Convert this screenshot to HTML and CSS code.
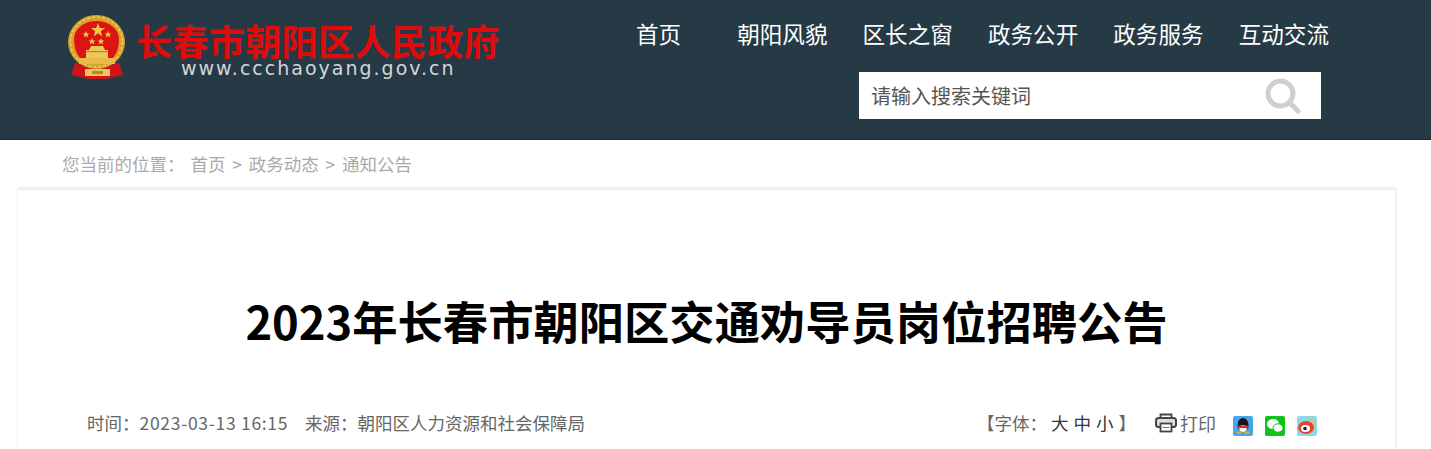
FILE: index.html
```html
<!DOCTYPE html>
<html>
<head>
  <meta charset="utf-8">
  <title>2023年长春市朝阳区交通劝导员岗位招聘公告</title>
  <link rel="stylesheet" href="styles.css">
</head>
<body>
  <div class="header">
    <div class="logo">
      <svg class="emblem" width="59" height="64" viewBox="0 0 59 64">
        <path d="M7 48 L3 60 L16 63 L42 63 L55 60 L51 48 Z" fill="#c8141c"/>
        <ellipse cx="28.500" cy="27" rx="28.500" ry="27" fill="#d9a02c"/>
        <ellipse cx="28.500" cy="27" rx="26" ry="25" fill="none" stroke="#f0cb5e" stroke-width="1.500" stroke-dasharray="3 2"/>
        <path d="M6 24 A22.500 18 0 0 1 51 24 Q51 36 45 43 L12 43 Q6 36 6 24 Z" fill="#dc1414"/>
        <polygon points="30,8 31.800,13 37,13 32.800,16.200 34.300,21.500 30,18.300 25.700,21.500 27.200,16.200 23,13 28.200,13" fill="#f5c840"/>
        <polygon points="18,16 19,18.500 21.500,18.500 19.500,20 20.200,22.500 18,21 15.800,22.500 16.500,20 14.500,18.500 17,18.500" fill="#f5c840"/>
        <polygon points="40,16 41,18.500 43.500,18.500 41.500,20 42.200,22.500 40,21 37.800,22.500 38.500,20 36.500,18.500 39,18.500" fill="#f5c840"/>
        <polygon points="24,23 25,25.500 27.500,25.500 25.500,27 26.200,29.500 24,28 21.800,29.500 22.500,27 20.500,25.500 23,25.500" fill="#f5c840"/>
        <polygon points="33,23 34,25.500 36.500,25.500 34.500,27 35.200,29.500 33,28 30.800,29.500 31.500,27 29.500,25.500 32,25.500" fill="#f5c840"/>
        <path d="M23 31 L35 31 L37 35 L40 35 L40 43 L18 43 L18 35 L21 35 Z" fill="#eec75a"/>
        <rect x="18" y="36" width="22" height="1.200" fill="#b8861e"/>
        <rect x="11" y="43" width="36" height="6" fill="#e9bc4a"/>
        <path d="M7 51 L17 54 L17 61 L5 60 Z M51 51 L42 54 L42 61 L53 60 Z" fill="#cf1519"/>
        <path d="M17 54 L42 54 L42 61 L17 61 Z" fill="#eec75a"/>
        <rect x="24" y="56" width="11" height="3" fill="#b8861e"/>
        <path d="M17 61 L42 61 L40 64 L19 64 Z" fill="#cf1519"/>
      </svg>
      <div class="logo-text">
        <div class="site-name">长春市朝阳区人民政府</div>
        <div class="site-url">www.ccchaoyang.gov.cn</div>
      </div>
    </div>
    <div class="head-right">
      <ul class="nav">
        <li class="first"><a href="#">首页</a></li>
        <li><a href="#">朝阳风貌</a></li>
        <li><a href="#">区长之窗</a></li>
        <li><a href="#">政务公开</a></li>
        <li><a href="#">政务服务</a></li>
        <li><a href="#">互动交流</a></li>
      </ul>
      <div class="search">
        <span class="search-text">请输入搜索关键词</span>
        <svg width="36" height="36" viewBox="0 0 36 36">
          <circle cx="15.500" cy="15.500" r="12.500" fill="none" stroke="#cfcfcf" stroke-width="5"/>
          <line x1="24.500" y1="24.500" x2="33" y2="33" stroke="#cfcfcf" stroke-width="5" stroke-linecap="round"/>
        </svg>
      </div>
    </div>
  </div>

  <div class="crumb">
    <span class="crumb-label">您当前的位置：</span>
    <a href="#">首页</a><span class="sep">&gt;</span><a href="#">政务动态</a><span class="sep">&gt;</span><a href="#">通知公告</a>
  </div>

  <div class="card">
    <h1 class="title">2023年长春市朝阳区交通劝导员岗位招聘公告</h1>
    <div class="meta">
      <div class="meta-left">
        <span>时间：<span class="time">2023-03-13 16:15</span></span>
        <span class="source">来源：朝阳区人力资源和社会保障局</span>
      </div>
      <div class="meta-right">
        <div class="font-size">【字体：<span class="sizes"><a href="#">大</a><a href="#">中</a><a href="#">小</a></span>】</div>
        <div class="print">
          <svg width="22" height="20" viewBox="0 0 22 20">
            <path d="M5.500 5 V1.500 H16.500 V5" fill="none" stroke="#444" stroke-width="1.800"/>
            <rect x="1" y="5" width="20" height="9" rx="2.500" fill="#ddd" stroke="#444" stroke-width="2"/>
            <rect x="5.500" y="10.500" width="11" height="8" fill="#fff" stroke="#444" stroke-width="1.800"/>
            <line x1="7.500" y1="14.500" x2="14.500" y2="14.500" stroke="#777"/>
          </svg>
          <span class="print-text">打印</span>
        </div>
        <div class="share">
          <svg width="20" height="20" viewBox="0 0 20 20">
            <rect width="20" height="20" rx="2" fill="#45a6ea"/>
            <ellipse cx="10" cy="9" rx="5.500" ry="7" fill="#15171c"/>
            <ellipse cx="10" cy="12.500" rx="3.800" ry="3.500" fill="#f4f1e8"/>
            <rect x="4.500" y="9.500" width="11" height="2.500" rx="1" fill="#d8282a"/>
            <ellipse cx="6" cy="16.800" rx="2.800" ry="1.300" fill="#eda526"/>
            <ellipse cx="14" cy="16.800" rx="2.800" ry="1.300" fill="#eda526"/>
          </svg>
          <svg width="20" height="20" viewBox="0 0 20 20">
            <rect width="20" height="20" rx="2" fill="#12c21c"/>
            <ellipse cx="8" cy="8" rx="6" ry="5" fill="#fff"/>
            <ellipse cx="13" cy="12" rx="5" ry="4.200" fill="#fff" stroke="#12c21c"/>
          </svg>
          <svg width="20" height="20" viewBox="0 0 20 20">
            <rect width="20" height="20" rx="2" fill="#8fd8ea"/>
            <ellipse cx="9" cy="11.500" rx="8" ry="6.500" fill="#e8432c"/>
            <ellipse cx="8.500" cy="12.500" rx="4.500" ry="3.500" fill="#fff"/>
            <circle cx="8" cy="12.500" r="1.800" fill="#222"/>
            <path d="M12 3 Q18 3 17.500 9" fill="none" stroke="#e8c24a" stroke-width="1.800"/>
          </svg>
        </div>
      </div>
    </div>
  </div>
</body>
</html>
```

FILE: styles.css
```css
* {
  box-sizing: border-box;
}

html, body {
  height: 449px;
  overflow: hidden;
}

body {
  margin: 0;
  background-color: #fff;
  font-family: "Noto Sans CJK SC", "Liberation Sans", sans-serif;
}

a {
  color: inherit;
  text-decoration: none;
}

.header {
  display: flex;
  height: 140px;
  padding-left: 68px;
  background-color: #263a46;
  border-bottom: 1px solid #1b2b35;
}

.logo {
  display: flex;
  width: 568px;
  padding-top: 15px;
}

.emblem {
  flex: none;
}

.logo-text {
  margin-left: 9px;
  padding-top: 7px;
}

.site-name {
  height: 36px;
  color: #e00b0b;
  font-size: 36px;
  font-weight: 700;
  letter-spacing: 0.400px;
  line-height: 36px;
  white-space: nowrap;
}

.site-url {
  margin-left: 45px;
  color: #d4d6d8;
  font-family: "DejaVu Sans", sans-serif;
  font-size: 19px;
  letter-spacing: 2px;
  line-height: 20px;
  white-space: nowrap;
}

.head-right {
  width: 693px;
}

.nav {
  display: flex;
  gap: 35px;
  margin: 0;
  padding: 14px 0 0;
  list-style: none;
  color: #fff;
  font-size: 22.600px;
  line-height: 40px;
}

.nav li {
  white-space: nowrap;
}

.nav .first {
  width: 68.500px;
}

.search {
  display: flex;
  align-items: center;
  justify-content: space-between;
  width: 462px;
  height: 47px;
  margin: 18px 0 0 223px;
  padding: 0 20px 0 12px;
  background-color: #fff;
}

.search-text {
  color: #555;
  font-size: 20px;
}

.crumb {
  height: 48px;
  padding: 11px 0 0 62px;
  color: #aaa;
  font-size: 17.500px;
  line-height: 26px;
}

.crumb-label {
  margin-right: 2px;
}

.sep {
  margin: 0 6.800px;
}

.card {
  height: 261px;
  margin: 0 36px 0 18px;
  padding: 95px 70px 0;
  border-top: 2px solid #eceff1;
  box-shadow: 1px 0 3px #dbe8f0, -1px 0 2px #f4f8fa;
}

.title {
  margin: 0;
  color: #000;
  font-size: 45.300px;
  font-weight: 700;
  line-height: 70px;
  text-align: center;
  white-space: nowrap;
}

.meta {
  display: flex;
  justify-content: space-between;
  margin-top: 55px;
  margin-left: -1px;
  color: #666;
  font-size: 17.500px;
  line-height: 26px;
}

.time {
  letter-spacing: 0.700px;
}

.source {
  margin-left: 13px;
}

.meta-right {
  display: flex;
  align-items: center;
  margin-right: 8px;
}

.font-size {
  margin-right: 19px;
}

.sizes {
  margin: 0 0 0 4px;
  color: #333;
}

.sizes a {
  margin-right: 5px;
}

.print {
  display: flex;
  align-items: center;
  gap: 3px;
  margin-right: 17px;
}

.print-text {
  font-size: 18px;
}

.share {
  display: flex;
  gap: 12px;
  margin-top: 6px;
}

.share svg {
  display: block;
}
```
